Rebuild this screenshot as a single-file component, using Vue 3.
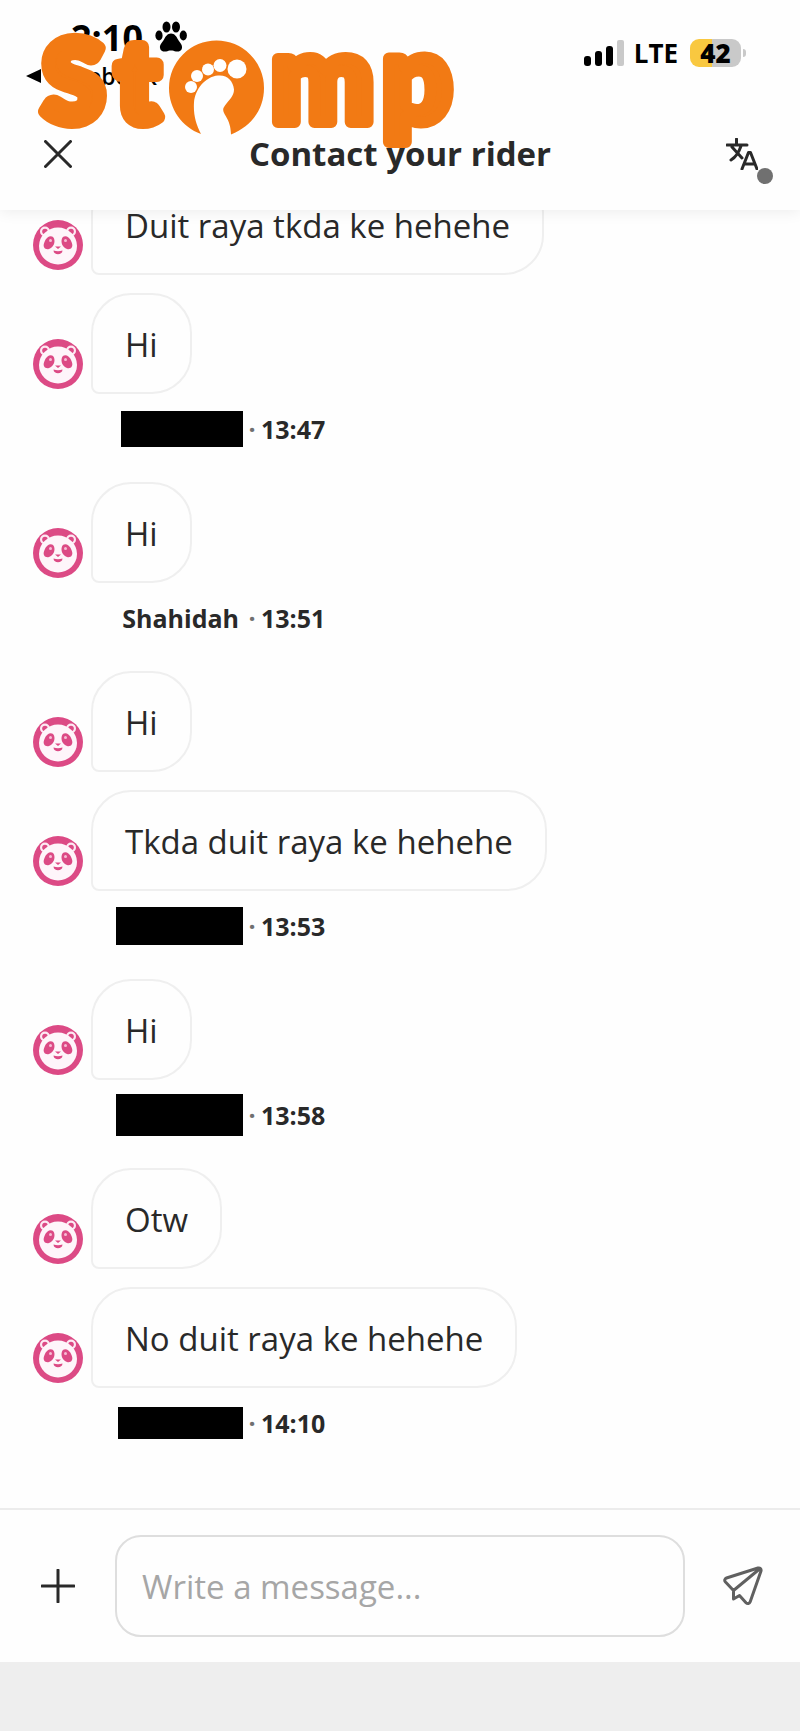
<template>
  <div class="app">
    <header class="header">
      <div class="status-bar">
        <div class="status-left">
          <div class="clock">
            <span>2:10</span>
            <svg class="paw" viewBox="0 0 32 32" aria-hidden="true">
              <ellipse cx="11.500" cy="6" rx="4" ry="5.500" />
              <ellipse cx="21" cy="6" rx="4" ry="5.500" />
              <ellipse cx="4" cy="14.500" rx="3.600" ry="5" />
              <ellipse cx="28.300" cy="14.500" rx="3.600" ry="5" />
              <path
                d="M16 12.500c3.500 0 5.500 3 7 6 1.500 3 4.500 5 4 8.500-.5 3-3.500 4-6 3.500-2-.5-3-1-5-1s-3 .5-5 1c-2.500.5-5.500-.5-6-3.500-.5-3.500 2.500-5.500 4-8.500 1.500-3 3.500-6 7-6z"
              />
            </svg>
          </div>
          <a class="back-link" href="#">
            <svg class="back-arrow" viewBox="0 0 15 14" aria-hidden="true">
              <path d="M0 7 15 0v14z" />
            </svg>
            Facebook
          </a>
        </div>
        <div class="status-right">
          <svg class="signal" viewBox="0 0 40 26" aria-hidden="true">
            <rect x="0" y="16" width="7" height="10" rx="3" />
            <rect x="11" y="11" width="7" height="15" rx="3" />
            <rect x="22" y="6" width="7" height="20" rx="3" />
            <rect x="33" y="0" width="7" height="26" rx="2" fill="#c9c9c9" />
          </svg>
          <span class="network">LTE</span>
          <span class="battery">42</span>
          <span class="battery-tip"></span>
        </div>
      </div>

      <div class="nav">
        <button class="icon-button" aria-label="Close">
          <svg class="close-icon" viewBox="0 0 28 28" aria-hidden="true">
            <path d="M1.500 1.500l25 25M26.500 1.500l-25 25" />
          </svg>
        </button>
        <h1 class="title">Contact your rider</h1>
        <button class="icon-button translate" aria-label="Translate">
          <svg class="translate-icon" viewBox="0 0 32 32" aria-hidden="true">
            <path d="M1 7h20M10.500 1v6M6 9l10 11M15 8C13 14 10 19 5 22" />
            <path d="M16 31 22.500 14.500h2L31 31M18.500 26h10" />
          </svg>
          <span class="translate-dot"></span>
        </button>
      </div>

      <svg class="logo" viewBox="0 0 430 140" role="img" aria-label="Stomp">
        <g class="logo-text">
          <text class="logo-cap" x="7" y="91">S</text>
          <text class="logo-cap" x="81" y="91">t</text>
          <text class="logo-low" x="235" y="92">m</text>
          <text class="logo-low" x="346" y="92">p</text>
        </g>
        <path
          fill="#f27a14"
          d="M165 104C146 97 133 79 133 58a47.500 47.500 0 0 1 95 0c0 21-12 38-33 46.500-.3-8-2-13-5-18-3-5-4-7-1-11 4-6 9-9 9-16-.8-9-7-15-16-14-13 1.200-23 14-24 27-.8 12 2 22 7 31.500z"
        />
        <g fill="#fff">
          <circle cx="155" cy="57" r="6" />
          <circle cx="161" cy="46" r="6" />
          <circle cx="172" cy="39.500" r="6" />
          <circle cx="184" cy="35.500" r="6.500" />
          <circle cx="201" cy="39" r="9.500" />
        </g>
      </svg>
    </header>

    <main class="chat">
      <section v-for="(group, i) in groups" :key="i" class="group">
        <div v-for="(text, j) in group.messages" :key="j" class="message">
          <svg class="avatar" viewBox="0 0 50 50" aria-hidden="true">
            <circle cx="25" cy="25" r="25" fill="#dc4a85" />
            <circle cx="12" cy="11.500" r="5" fill="#fdeaf3" />
            <circle cx="38" cy="11.500" r="5" fill="#fdeaf3" />
            <circle cx="12" cy="11.500" r="2.800" fill="#dc4a85" />
            <circle cx="38" cy="11.500" r="2.800" fill="#dc4a85" />
            <ellipse cx="25" cy="26" rx="19" ry="18.500" fill="#fef5fa" />
            <g fill="#dc4a85">
              <path d="M11.500 22c2-6 8-7.500 9.500-3.500 1.500 4-.5 9-5 10.500-3.500 1-7-1.500-4.500-7z" />
              <path d="M38.500 22c-2-6-8-7.500-9.500-3.500-1.500 4 .5 9 5 10.500 3.500 1 7-1.500 4.500-7z" />
              <path d="M22 26.500h6l-3 2.500z" />
              <path d="M20.500 30.500c3 1 6 1 9 0 0 5-9 5-9 0z" />
            </g>
            <circle cx="17.500" cy="20.500" r="1.500" fill="#f7bcd5" />
            <circle cx="32.500" cy="20.500" r="1.500" fill="#f7bcd5" />
          </svg>
          <p class="bubble">{{ text }}</p>
        </div>
        <div class="meta">
          <div class="sender">
            <span v-if="group.name" class="name">{{ group.name }}</span>
            <span
              v-else
              class="redacted"
              :style="{ width: group.bar[0] + 'px', height: group.bar[1] + 'px' }"
            ></span>
          </div>
          <span class="dot">·</span>
          <time>{{ group.time }}</time>
        </div>
      </section>
    </main>

    <form class="composer" @submit.prevent="send">
      <button type="button" class="icon-button" aria-label="Add attachment">
        <svg class="plus-icon" viewBox="0 0 34 34" aria-hidden="true">
          <path d="M17 1v32M1 17h32" />
        </svg>
      </button>
      <input
        v-model="draft"
        class="message-input"
        type="text"
        placeholder="Write a message..."
        aria-label="Write a message"
      />
      <button type="submit" class="icon-button" aria-label="Send">
        <svg class="send-icon" viewBox="0 0 40 40" aria-hidden="true">
          <path
            d="M35 2 3.500 12c-2 .8-2.300 2.500-1 4L10.500 24.500v8.500l6-3.500 6.500 7.200c1.500 1.500 3.500 1 4.200-1L38 5c.5-2-1-3.500-3-3zM10.500 24.500 36.500 3"
          />
        </svg>
      </button>
    </form>
    <div class="bottom-bar"></div>
  </div>
</template>

<script setup>
import { ref } from "vue";

const draft = ref("");

// bar is the [width, height] of the box that hides a sender's name
const groups = ref([
  { messages: ["Duit raya tkda ke hehehe", "Hi"], bar: [122, 36], time: "13:47" },
  { messages: ["Hi"], name: "Shahidah", time: "13:51" },
  { messages: ["Hi", "Tkda duit raya ke hehehe"], bar: [127, 38], time: "13:53" },
  { messages: ["Hi"], bar: [127, 42], time: "13:58" },
  { messages: ["Otw", "No duit raya ke hehehe"], bar: [125, 32], time: "14:10" },
]);

function send() {
  draft.value = "";
}
</script>

<style>
body {
  margin: 0;
  background: #fefefe;
}
</style>

<style scoped>
.app {
  display: flex;
  flex-direction: column;
  min-height: 100vh;
  font-family: "Open Sans", "Noto Sans", sans-serif;
  color: #292929;
}
.header {
  position: relative;
  z-index: 1;
  background: #fefefe;
  box-shadow: 0 2px 14px rgba(0, 0, 0, 0.07);
}
.status-bar {
  display: flex;
  justify-content: space-between;
  height: 104px;
  box-sizing: border-box;
  padding: 16px 54px 0 26px;
  color: #000;
}
.clock {
  display: flex;
  gap: 12px;
  padding-left: 45px;
  font-size: 36px;
  line-height: 44px;
  font-weight: 700;
}
.paw {
  width: 32px;
  height: 32px;
  margin-top: 5px;
}
.back-link {
  display: flex;
  align-items: center;
  gap: 10px;
  color: #000;
  font-size: 23px;
  line-height: 32px;
  font-weight: 600;
  text-decoration: none;
}
.back-arrow {
  width: 15px;
  height: 14px;
}
.status-right {
  display: flex;
  align-items: center;
  height: 74px;
}
.signal {
  width: 40px;
  height: 26px;
}
.network {
  margin: 0 12px 0 10px;
  font-size: 26px;
  line-height: 28px;
  font-weight: 700;
}
.battery {
  width: 51px;
  border-radius: 9px;
  background: linear-gradient(90deg, #f9c840 43%, #c9c9c9 43%);
  font-size: 26px;
  line-height: 28px;
  font-weight: 800;
  text-align: center;
}
.battery-tip {
  width: 3px;
  height: 8px;
  margin-left: 2px;
  border-radius: 0 4px 4px 0;
  background: #c9c9c9;
}
.nav {
  display: flex;
  align-items: center;
  justify-content: space-between;
  height: 100px;
  padding: 0 0 6px;
}
.icon-button {
  display: flex;
  flex: none;
  align-items: center;
  justify-content: center;
  width: 115px;
  height: 60px;
  padding: 0;
  border: 0;
  background: none;
  cursor: pointer;
}
.icon-button path {
  fill: none;
  stroke: #292929;
  stroke-width: 3;
  stroke-linecap: round;
  stroke-linejoin: round;
}
.close-icon {
  width: 28px;
  height: 28px;
}
.title {
  margin: 0;
  font-size: 33px;
  line-height: 48px;
  font-weight: 700;
}
.translate {
  position: relative;
}
.translate-icon {
  width: 32px;
  height: 32px;
}
.translate-dot {
  position: absolute;
  right: 27px;
  bottom: 0;
  width: 16px;
  height: 16px;
  border-radius: 50%;
  background: #707070;
}
.logo {
  position: absolute;
  top: 30px;
  left: 36px;
  width: 430px;
  height: 140px;
  overflow: visible;
  pointer-events: none;
}
.logo-text {
  font-family: Lato, sans-serif;
  font-weight: 900;
  fill: #f27a14;
  stroke: #f27a14;
  stroke-linejoin: round;
}
.logo-cap {
  font-size: 110px;
  stroke-width: 14px;
}
.logo-low {
  font-size: 122px;
  stroke-width: 12px;
}
.chat {
  flex: 1 0 auto;
  overflow: hidden;
  padding-bottom: 30px;
}
/* the oldest message is partly scrolled under the header */
.group:first-child {
  margin-top: -36px;
}
.message {
  display: flex;
  align-items: flex-end;
  gap: 8px;
  padding: 0 33px;
}
.message + .message {
  margin-top: 18px;
}
.avatar {
  flex: none;
  width: 50px;
  height: 50px;
  margin-bottom: 5px;
}
.bubble {
  margin: 0;
  padding: 25px 32px 23px;
  border: 2px solid #efefef;
  border-radius: 40px 40px 40px 8px;
  font-size: 33px;
  line-height: 49px;
}
.meta {
  display: flex;
  align-items: center;
  height: 69px;
  margin-bottom: 19px;
  padding-left: 115px;
  font-size: 25px;
  line-height: 34px;
  font-weight: 700;
}
.sender {
  display: flex;
  justify-content: flex-end;
  width: 128px;
}
.name {
  padding-right: 4px;
}
.redacted {
  background: #000;
}
.dot {
  width: 18px;
  color: #707070;
  text-align: center;
}
.composer {
  display: flex;
  align-items: center;
  padding: 25px 0;
  border-top: 2px solid #ececec;
}
.message-input {
  flex: 1;
  min-width: 0;
  height: 102px;
  box-sizing: border-box;
  padding: 0 25px;
  border: 2px solid #dedede;
  border-radius: 26px;
  background: #fefefe;
  color: #292929;
  font-family: inherit;
  font-size: 33px;
}
.message-input::placeholder {
  color: #a6a6a6;
  opacity: 1;
}
.plus-icon {
  width: 34px;
  height: 34px;
}
.send-icon {
  width: 40px;
  height: 40px;
}
.send-icon path {
  stroke: #606060;
}
.bottom-bar {
  height: 69px;
  background: #eee;
}
</style>
